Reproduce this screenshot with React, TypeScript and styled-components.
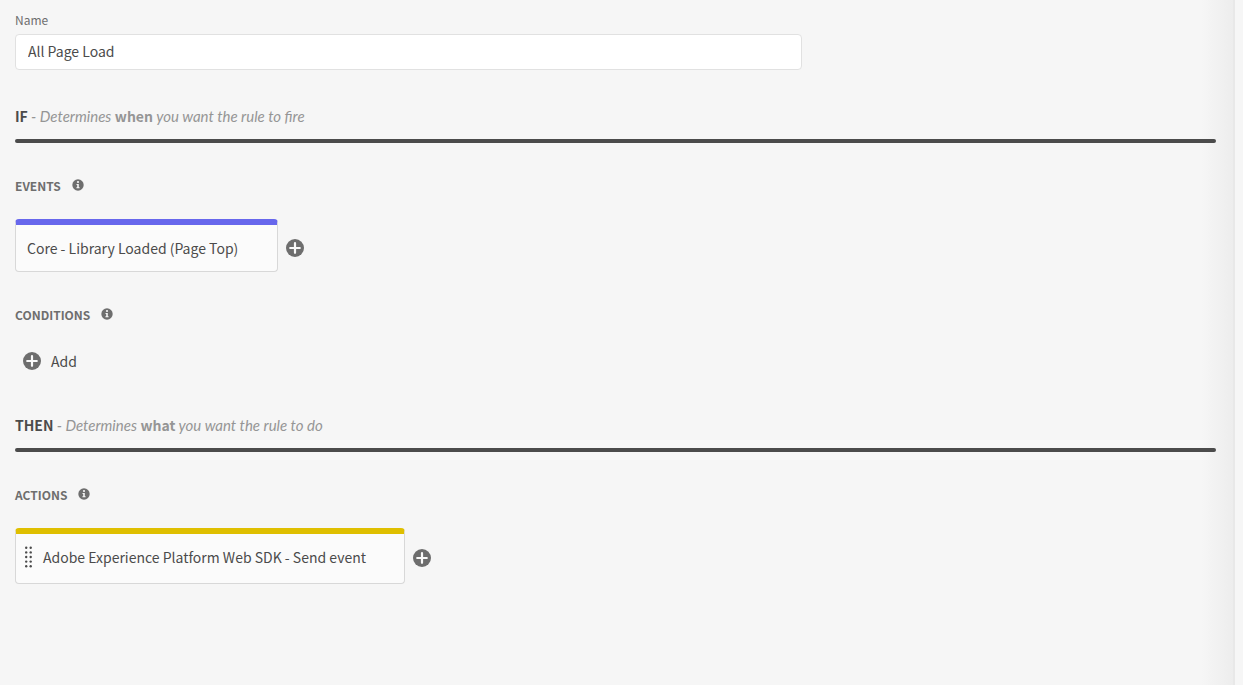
import React from "react";
import styled, { createGlobalStyle } from "styled-components";

const GlobalStyle = createGlobalStyle`
  *, *::before, *::after { box-sizing: border-box; }
  body {
    margin: 0;
    background: #f6f6f6;
    color: #4b4b4b;
    font-family: "Noto Sans CJK SC", "Noto Sans", sans-serif;
    font-size: 14px;
    line-height: 24px;
  }
  button, input { font: inherit; color: inherit; }
`;

const Page = styled.div`
  display: flex;
  min-height: 100vh;
`;

const Editor = styled.main`
  flex: 1;
  min-width: 0;
  padding: 10px 17px 32px 15px;
  border-right: 2px solid #e8e8e8;
  background: linear-gradient(to left, #ededed, #f6f6f6 32px);
`;

const Gutter = styled.div`
  flex: none;
  width: 8px;
  background: #f6f6f6;
`;

const Field = styled.div`
  display: flex;
  flex-direction: column;
  gap: 4px;
  width: 787px;
  max-width: 100%;
`;

const FieldLabel = styled.label`
  font-size: 12px;
  line-height: 20px;
  color: #6e6e6e;
`;

const TextInput = styled.input`
  height: 36px;
  padding: 0 12px 2px;
  border: 1px solid #e1e1e1;
  border-radius: 4px;
  background: #fff;
  outline: none;
`;

const Section = styled.section<{ $gap: number }>`
  margin-top: ${(p) => p.$gap}px;
`;

const SectionTitle = styled.h2`
  margin: 0;
  font-size: 14px;
  line-height: 24px;
  font-weight: 700;

  &::after {
    content: "";
    display: block;
    height: 4px;
    margin-top: 11px;
    border-radius: 2px;
    background: #4b4b4b;
  }
`;

const Hint = styled.em`
  font-family: Lato, sans-serif;
  font-size: 15px;
  line-height: 16px;
  font-weight: 400;
  color: #959595;

  strong {
    font-family: "Noto Sans CJK SC", "Noto Sans", sans-serif;
    font-size: 14px;
    font-style: normal;
    font-weight: 700;
  }
`;

const Group = styled.div`
  padding-top: 33px;
`;

const GroupHeader = styled.div`
  display: flex;
  align-items: center;
  gap: 11px;
  height: 20px;
  margin-bottom: 23px;

  svg { margin-bottom: 2px; }
`;

const GroupTitle = styled.h3`
  margin: 0;
  font-size: 12px;
  line-height: 20px;
  font-weight: 700;
  color: #6e6e6e;
  text-transform: uppercase;
`;

const Row = styled.div`
  display: flex;
  align-items: center;
  gap: 8px;
`;

const Card = styled.button<{ $accent: string; $width: number; $height: number }>`
  display: flex;
  align-items: center;
  gap: 11px;
  width: ${(p) => p.$width}px;
  height: ${(p) => p.$height}px;
  padding: 0 8px 0 11px;
  border: 1px solid #d8d8d8;
  border-top: 6px solid ${(p) => p.$accent};
  border-radius: 4px;
  background: #fbfbfb;
  text-align: left;
  white-space: nowrap;
  cursor: pointer;
`;

const DragCard = styled(Card)`
  padding: 0 8px 4px;
`;

const IconButton = styled.button`
  display: flex;
  padding: 4px 0 0;
  border: 0;
  background: none;
  cursor: pointer;
`;

const AddButton = styled.button`
  display: flex;
  align-items: center;
  gap: 10px;
  height: 26px;
  padding: 0 8px;
  border: 0;
  background: none;
  cursor: pointer;
`;

const InfoIcon = () => (
  <svg width="12" height="12" viewBox="0 0 12 12" aria-hidden="true">
    <circle cx="6" cy="6" r="5.7" fill="#6e6e6e" />
    <circle cx="6" cy="3" r="1.1" fill="#f6f6f6" />
    <path d="M4.5 5h2.3v3.2h.8v1.1H4.4V8.2h.8V6.1h-.7z" fill="#f6f6f6" />
  </svg>
);

const PlusIcon = () => (
  <svg width="18" height="18" viewBox="0 0 18 18" aria-hidden="true">
    <circle cx="9" cy="9" r="9" fill="#6e6e6e" />
    <path d="M9 4.2v9.6M4.2 9h9.6" stroke="#fafafa" strokeWidth="2.2" strokeLinecap="round" />
  </svg>
);

const DragIcon = () => (
  <svg width="8" height="22" viewBox="0 0 8 22" aria-hidden="true" fill="#4b4b4b">
    {[1.8, 6.4, 11, 15.6, 20.2].map((y) => (
      <React.Fragment key={y}>
        <circle cx="2.2" cy={y} r="1.2" />
        <circle cx="6.7" cy={y} r="1.2" />
      </React.Fragment>
    ))}
  </svg>
);

const GroupHeading = ({ title }: { title: string }) => (
  <GroupHeader>
    <GroupTitle>{title}</GroupTitle>
    <InfoIcon />
  </GroupHeader>
);

export default function App() {
  return (
    <>
      <GlobalStyle />
      <Page>
        <Editor>
          <Field>
            <FieldLabel htmlFor="rule-name">Name</FieldLabel>
            <TextInput id="rule-name" type="text" defaultValue="All Page Load" />
          </Field>

          <Section $gap={34}>
            <SectionTitle>
              IF <Hint>- Determines <strong>when</strong> you want the rule to fire</Hint>
            </SectionTitle>
            <Group>
              <GroupHeading title="Events" />
              <Row>
                <Card type="button" $accent="#6767ec" $width={263} $height={53}>
                  Core - Library Loaded (Page Top)
                </Card>
                <IconButton type="button" aria-label="Add event"><PlusIcon /></IconButton>
              </Row>
            </Group>
            <Group>
              <GroupHeading title="Conditions" />
              <AddButton type="button"><PlusIcon />Add</AddButton>
            </Group>
          </Section>

          <Section $gap={39}>
            <SectionTitle>
              THEN <Hint>- Determines <strong>what</strong> you want the rule to do</Hint>
            </SectionTitle>
            <Group>
              <GroupHeading title="Actions" />
              <Row>
                <DragCard type="button" $accent="#dfbf00" $width={390} $height={56}>
                  <DragIcon />
                  Adobe Experience Platform Web SDK - Send event
                </DragCard>
                <IconButton type="button" aria-label="Add action"><PlusIcon /></IconButton>
              </Row>
            </Group>
          </Section>
        </Editor>
        <Gutter />
      </Page>
    </>
  );
}
